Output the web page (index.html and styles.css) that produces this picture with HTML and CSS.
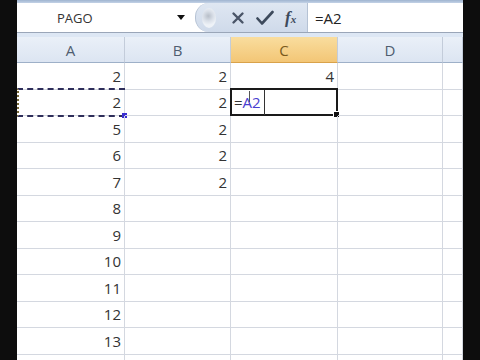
FILE: index.html
```html
<!DOCTYPE html>
<html lang="es">
<head>
    <meta charset="UTF-8">
    <title>Hoja de cálculo</title>
    <link rel="stylesheet" href="styles.css">
</head>
<body>

    <div class="screen">
        <div class="top-band"></div>

        <!-- barra de fórmulas -->
        <div class="formula-bar">
            <div class="name-box">
                <span class="name">PAGO</span>
                <span class="arrow"></span>
            </div>
            <div class="fx-buttons">
                <span class="knob"></span>
                <svg class="icon" width="14" height="14" viewBox="0 0 14 14">
                    <path d="M2.5 2.5 L11.5 11.5 M11.5 2.5 L2.5 11.5" stroke="#4a5568" stroke-width="2.4" stroke-linecap="round"/>
                </svg>
                <svg class="icon" width="18" height="16" viewBox="0 0 18 16">
                    <path d="M1.5 8.5 L6 13.5 L16.5 2" fill="none" stroke="#3d4a5c" stroke-width="2.6" stroke-linecap="round" stroke-linejoin="round"/>
                </svg>
                <span class="fx">f<small>x</small></span>
            </div>
            <div class="formula-input">=A2</div>
        </div>

        <div class="gap"></div>

        <!-- hoja -->
        <div class="sheet">
            <div class="col-head">A</div>
            <div class="col-head">B</div>
            <div class="col-head active">C</div>
            <div class="col-head">D</div>
            <div class="col-head"></div>

            <div class="cell">2</div>
            <div class="cell">2</div>
            <div class="cell">4</div>
            <div class="cell"></div>
            <div class="cell"></div>

            <div class="cell copied">2</div>
            <div class="cell">2</div>
            <div class="cell editing"><span class="eq">=</span><span class="ref">A2</span><span class="caret"></span><span class="edge"></span></div>
            <div class="cell"></div>
            <div class="cell"></div>

            <div class="cell">5</div>
            <div class="cell">2</div>
            <div class="cell"></div>
            <div class="cell"></div>
            <div class="cell"></div>

            <div class="cell">6</div>
            <div class="cell">2</div>
            <div class="cell"></div>
            <div class="cell"></div>
            <div class="cell"></div>

            <div class="cell">7</div>
            <div class="cell">2</div>
            <div class="cell"></div>
            <div class="cell"></div>
            <div class="cell"></div>

            <div class="cell">8</div>
            <div class="cell"></div>
            <div class="cell"></div>
            <div class="cell"></div>
            <div class="cell"></div>

            <div class="cell">9</div>
            <div class="cell"></div>
            <div class="cell"></div>
            <div class="cell"></div>
            <div class="cell"></div>

            <div class="cell">10</div>
            <div class="cell"></div>
            <div class="cell"></div>
            <div class="cell"></div>
            <div class="cell"></div>

            <div class="cell">11</div>
            <div class="cell"></div>
            <div class="cell"></div>
            <div class="cell"></div>
            <div class="cell"></div>

            <div class="cell">12</div>
            <div class="cell"></div>
            <div class="cell"></div>
            <div class="cell"></div>
            <div class="cell"></div>

            <div class="cell">13</div>
            <div class="cell"></div>
            <div class="cell"></div>
            <div class="cell"></div>
            <div class="cell"></div>

            <div class="cell"></div>
            <div class="cell"></div>
            <div class="cell"></div>
            <div class="cell"></div>
            <div class="cell"></div>
        </div>
    </div>

</body>
</html>
```

FILE: styles.css
```css
body {
    margin: 0;
    background-color: #0d0d0d;
    font-family: 'Open Sans', 'Liberation Sans', sans-serif;
    overflow: hidden;
}

.screen {
    margin-left: 17px;
    width: 446px;
    height: 360px;
    background-color: #ffffff;
    overflow: hidden;
}

.top-band {
    height: 3px;
    background: linear-gradient(#9fb4d0, #c3d2e6);
}

.formula-bar {
    display: flex;
    align-items: center;
    height: 29px;
    background-color: #ffffff;
    border-bottom: 1px solid #9aa6b8;
}

.name-box {
    display: flex;
    align-items: center;
    width: 178px;
    height: 100%;
    padding-left: 40px;
    box-sizing: border-box;
}

.name {
    flex: 1;
    font-size: 13px;
    color: #333;
}

.arrow {
    width: 0;
    height: 0;
    margin-right: 10px;
    border-left: 4px solid transparent;
    border-right: 4px solid transparent;
    border-top: 5px solid #111;
}

.fx-buttons {
    display: flex;
    align-items: center;
    gap: 11px;
    width: 112px;
    height: 100%;
    padding-left: 6px;
    box-sizing: border-box;
    background: linear-gradient(#dfe7f2, #cfdaea);
    border-radius: 14px 0 0 14px;
    border-left: 1px solid #b5c2d4;
}

.knob {
    width: 14px;
    height: 20px;
    border-radius: 50%;
    background: radial-gradient(circle at 45% 40%, #b7bec8 0, #d9dfe8 5px, #eef2f7 9px);
    margin-right: 4px;
}

.icon {
    display: block;
}

.fx {
    font-family: 'Liberation Serif', serif;
    font-style: italic;
    font-weight: bold;
    font-size: 17px;
    color: #3d4a5c;
}

.fx small {
    font-size: 11px;
}

.formula-input {
    flex: 1;
    height: 100%;
    display: flex;
    align-items: center;
    padding-left: 7px;
    border-left: 1px solid #b5c2d4;
    font-size: 15px;
    color: #222;
}

.gap {
    height: 4px;
    background-color: #dde7f4;
}

.sheet {
    display: grid;
    grid-template-columns: 108px 106px 107px 105px 20px;
    grid-template-rows: 26px repeat(12, 26.5px);
}

.col-head {
    display: flex;
    align-items: center;
    justify-content: center;
    background: linear-gradient(#eaf0f8, #dce5f2);
    border-right: 1px solid #c3ccda;
    border-bottom: 1px solid #9eb0c8;
    font-size: 15px;
    color: #4f5d70;
}

.col-head.active {
    background: linear-gradient(#f9dd9e, #f3c676);
    border-bottom-color: #d9a24a;
    color: #7a5a1c;
}

.cell {
    position: relative;
    display: flex;
    align-items: center;
    justify-content: flex-end;
    padding-right: 3px;
    border-right: 1px solid #d4d8e0;
    border-bottom: 1px solid #d4d8e0;
    font-size: 15px;
    color: #333;
}

/* marco de copia (hormigas) */
.cell.copied::before {
    content: "";
    position: absolute;
    left: 0;
    right: -1px;
    top: -2px;
    bottom: -2px;
    border-top: 2px dashed #2e2e5a;
    border-bottom: 2px dashed #2e2e5a;
    border-left: 2px dotted #7a6a3a;
}

.cell.copied::after {
    content: "";
    position: absolute;
    right: -3px;
    bottom: -3px;
    width: 5px;
    height: 5px;
    background-color: #3a2fd0;
}

.cell.editing {
    justify-content: flex-start;
    padding-left: 3px;
}

.cell.editing::before {
    content: "";
    position: absolute;
    left: -1px;
    right: -1px;
    top: -2px;
    bottom: -1px;
    border: 2px solid #1a1a1a;
}

.cell.editing::after {
    content: "";
    position: absolute;
    right: -3px;
    bottom: -3px;
    width: 5px;
    height: 5px;
    background-color: #111;
    border: 1px solid #fff;
}

.eq {
    color: #333;
}

.ref {
    color: #4a3fd0;
}

.caret {
    position: absolute;
    left: 18px;
    top: 1px;
    width: 1px;
    height: 11px;
    background-color: #555;
}

.edge {
    position: absolute;
    left: 33px;
    top: 0;
    bottom: 0;
    width: 1px;
    background-color: #333;
}
```
